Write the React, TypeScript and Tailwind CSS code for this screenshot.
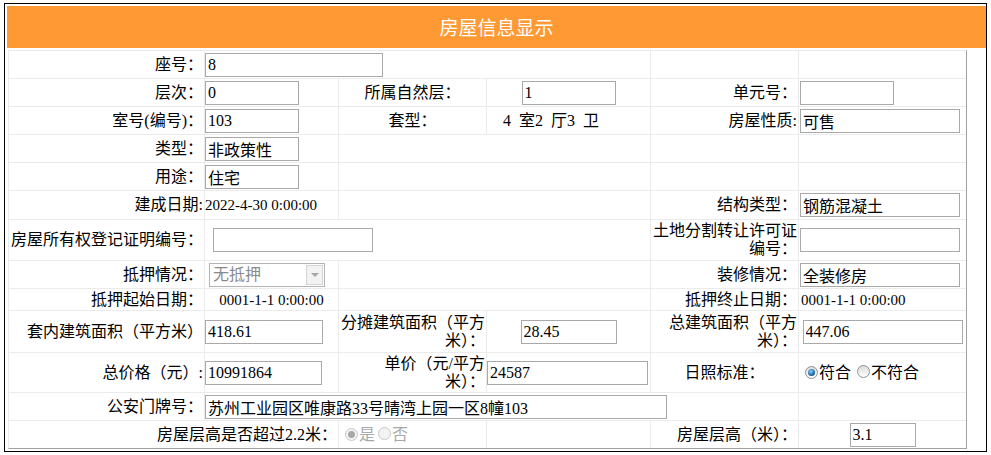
import type { ReactNode } from "react";

// 单元格：白底，靠表格背景色露出 1px 的浅灰格线
function Cell({ children, className = "" }: { children?: ReactNode; className?: string }) {
  return <div className={`flex items-center bg-white ${className}`}>{children}</div>;
}

function Label({ children, className = "" }: { children: ReactNode; className?: string }) {
  return <Cell className={`justify-end pr-px text-right ${className}`}>{children}</Cell>;
}

function Field({ value, w, className = "" }: { value: string; w: string; className?: string }) {
  return (
    <input
      readOnly
      value={value}
      className={`${w} h-[24px] border border-[#a9a9a9] bg-white px-[2px] text-[16px] leading-[20px] text-black outline-none ${className}`}
    />
  );
}

function Radio({ checked, disabled }: { checked?: boolean; disabled?: boolean }) {
  return (
    <span
      className={`inline-flex h-[13px] w-[13px] shrink-0 items-center justify-center rounded-full border ${
        disabled ? "border-[#c8c8c8] bg-[#f3f3f3]" : "border-[#8e8f8f] bg-gradient-to-b from-[#dcdcdc] to-white"
      }`}
    >
      {checked && (
        <span
          className={`h-[7px] w-[7px] rounded-full ${
            disabled
              ? "bg-[#a8a8a8]"
              : "bg-[radial-gradient(circle_at_40%_35%,#8fd0f5,#14609f_65%)]"
          }`}
        />
      )}
    </span>
  );
}

const Sp = () => <span className="inline-block w-[8px]" />;

export default function App() {
  return (
    <div className="pl-[4px] pt-[3px] font-['Liberation_Serif','Noto_Sans_CJK_SC',serif] text-[16px] leading-[18px] text-black">
      <div className="h-[449px] w-[983px] border border-black pl-[2px] pt-[2px]">
        <div className="flex h-[42px] w-[979px] items-center justify-center bg-[#ff9933] font-['Noto_Sans_CJK_SC',sans-serif] text-[19px] text-white">
          房屋信息显示
        </div>

        <div className="ml-px mt-[2px] grid w-[959px] grid-cols-[195px_133px_147px_163px_147px_167px] grid-rows-[27px_27px_27px_27px_27px_28px_40px_27px_21px_41px_39px_27px_27px] gap-px border border-[#ebebeb] border-b-[#a0a0a0] border-r-[#a0a0a0] bg-[#ebebeb]">
          {/* 座号 */}
          <Label>座号：</Label>
          <Cell className="col-span-3">
            <Field value="8" w="w-[178px]" />
          </Cell>
          <Cell />
          <Cell />

          {/* 层次 */}
          <Label>层次：</Label>
          <Cell>
            <Field value="0" w="w-[94px]" />
          </Cell>
          <Cell className="justify-center">所属自然层：</Cell>
          <Cell className="justify-center">
            <Field value="1" w="w-[94px]" />
          </Cell>
          <Label>单元号：</Label>
          <Cell className="pl-px">
            <Field value="" w="w-[94px]" />
          </Cell>

          {/* 室号 */}
          <Label>室号(编号)：</Label>
          <Cell>
            <Field value="103" w="w-[94px]" />
          </Cell>
          <Cell className="justify-center">套型：</Cell>
          <Cell className="pl-[16px]">
            4<Sp />室2<Sp />厅3<Sp />卫
          </Cell>
          <Label>房屋性质:</Label>
          <Cell className="pl-px">
            <Field value="可售" w="w-[160px]" />
          </Cell>

          {/* 类型 */}
          <Label>类型：</Label>
          <Cell>
            <Field value="非政策性" w="w-[94px]" />
          </Cell>
          <Cell className="col-span-2" />
          <Cell />
          <Cell />

          {/* 用途 */}
          <Label>用途：</Label>
          <Cell>
            <Field value="住宅" w="w-[94px]" />
          </Cell>
          <Cell className="col-span-2" />
          <Cell />
          <Cell />

          {/* 建成日期 */}
          <Label>建成日期:</Label>
          <Cell className="text-[15px]">2022-4-30 0:00:00</Cell>
          <Cell className="col-span-2" />
          <Label>结构类型：</Label>
          <Cell className="pl-px">
            <Field value="钢筋混凝土" w="w-[160px]" />
          </Cell>

          {/* 证号 */}
          <Label>房屋所有权登记证明编号：</Label>
          <Cell className="col-span-3 pl-[8px]">
            <Field value="" w="w-[160px]" />
          </Cell>
          <Label>
            土地分割转让许可证
            <br />
            编号：
          </Label>
          <Cell className="pl-px">
            <Field value="" w="w-[160px]" />
          </Cell>

          {/* 抵押情况 */}
          <Label>抵押情况：</Label>
          <Cell className="pl-[4px]">
            <div className="flex h-[24px] w-[116px] items-center border border-[#b4b4b4] bg-white pl-[3px] text-[#8a8a8a]">
              <span className="flex-1">无抵押</span>
              <span className="mr-px flex h-[20px] w-[17px] items-center justify-center border border-[#d4d4d4] bg-[#f3f3f3]">
                <span className="h-0 w-0 border-x-[4px] border-t-[4px] border-x-transparent border-t-[#a6a6a6]" />
              </span>
            </div>
          </Cell>
          <Cell className="col-span-2" />
          <Label>装修情况：</Label>
          <Cell className="pl-px">
            <Field value="全装修房" w="w-[160px]" />
          </Cell>

          {/* 抵押日期 */}
          <Label>抵押起始日期：</Label>
          <Cell className="justify-center text-[15px]">0001-1-1 0:00:00</Cell>
          <Cell className="col-span-2" />
          <Label>抵押终止日期：</Label>
          <Cell className="pl-[2px] text-[15px]">0001-1-1 0:00:00</Cell>

          {/* 面积 */}
          <Label>套内建筑面积（平方米）</Label>
          <Cell>
            <Field value="418.61" w="w-[118px]" />
          </Cell>
          <Label>
            分摊建筑面积（平方
            <br />
            米）：
          </Label>
          <Cell className="justify-center">
            <Field value="28.45" w="w-[96px]" />
          </Cell>
          <Label>
            总建筑面积（平方
            <br />
            米）：
          </Label>
          <Cell className="justify-center">
            <Field value="447.06" w="w-[160px]" />
          </Cell>

          {/* 价格 */}
          <Label>总价格（元）:</Label>
          <Cell>
            <Field value="10991864" w="w-[117px]" />
          </Cell>
          <Label>
            单价（元/平方
            <br />
            米）：
          </Label>
          <Cell>
            <Field value="24587" w="w-[161px]" />
          </Cell>
          <Cell className="justify-center">日照标准：</Cell>
          <Cell className="pl-[6px]">
            <Radio checked />
            <span className="ml-px">符合</span>
            <span className="ml-[6px]">
              <Radio />
            </span>
            <span className="ml-px">不符合</span>
          </Cell>

          {/* 门牌号 */}
          <Label>公安门牌号：</Label>
          <Cell className="col-span-4">
            <Field value="苏州工业园区唯康路33号晴湾上园一区8幢103" w="w-[462px]" />
          </Cell>
          <Cell />

          {/* 层高 */}
          <Label className="col-span-2">房屋层高是否超过2.2米：</Label>
          <Cell className="pl-[6px] text-[#a8a8a8]">
            <Radio checked disabled />
            <span className="ml-px">是</span>
            <span className="ml-[3px]">
              <Radio disabled />
            </span>
            <span className="ml-px">否</span>
          </Cell>
          <Cell />
          <Label>房屋层高（米）：</Label>
          <Cell className="justify-center">
            <Field value="3.1" w="w-[66px]" />
          </Cell>
        </div>
      </div>
    </div>
  );
}
